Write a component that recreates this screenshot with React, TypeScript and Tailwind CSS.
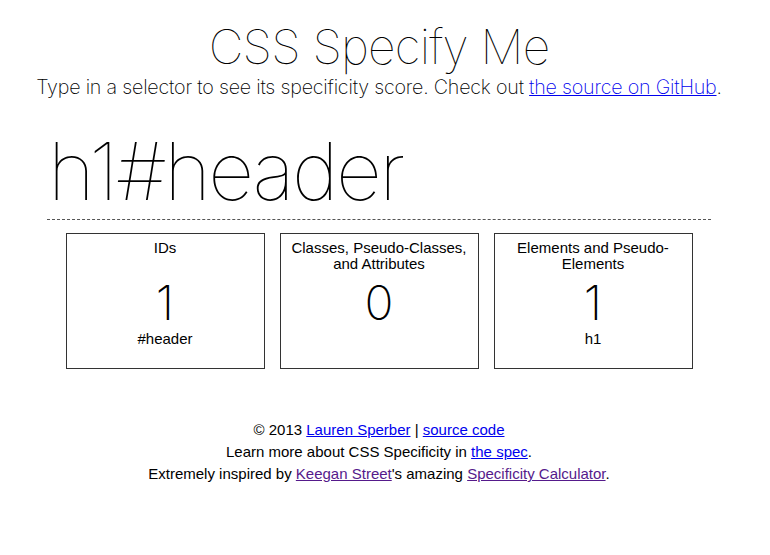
export default function App() {
  const boxes = [
    { title: "IDs", count: 1, items: "#header" },
    { title: "Classes, Pseudo-Classes, and Attributes", count: 0, items: "" },
    { title: "Elements and Pseudo-Elements", count: 1, items: "h1" },
  ]

  return (
    <div className="w-[758px] bg-white text-black" style={{ fontFamily: '"Liberation Sans", Arial, sans-serif' }}>
      <header className="text-center pt-[19px]" style={{ fontFamily: "Inter, sans-serif" }}>
        <h1 className="text-[48px] leading-[56px] font-thin tracking-[-0.8px]">CSS Specify Me</h1>
        <p className="text-[19.7px] leading-[24px] font-extralight tracking-[-0.2px]">
          Type in a selector to see its specificity score. Check out{" "}
          <a href="#" className="text-[#0000ee] underline">the source on GitHub</a>.
        </p>
      </header>

      {/* Selector input */}
      <div className="mx-[47px] mt-[24px] border-b border-dashed border-[#555]">
        <input
          defaultValue="h1#header"
          className="w-full pl-[1px] text-[80px] leading-[96px] font-thin tracking-[-2.5px] outline-none bg-transparent"
          style={{ fontFamily: "Inter, sans-serif" }}
        />
      </div>

      {/* Scores */}
      <div className="flex justify-center gap-[15px] mt-[13px]">
        {boxes.map((box) => (
          <div key={box.title} className="w-[199px] h-[136px] border border-[#333] text-center px-[6px] pt-[6px]">
            <div className="h-[32px] text-[15px] leading-[16px]">{box.title}</div>
            <div className="mt-[2px] text-[48px] leading-[58px] font-[150]" style={{ fontFamily: "Inter, sans-serif" }}>
              {box.count}
            </div>
            <div className="text-[15px] leading-[14px]">{box.items}</div>
          </div>
        ))}
      </div>

      <footer className="text-center text-[15px] leading-[22px] mt-[50px]">
        <p>
          © 2013 <a href="#" className="text-[#0000ee] underline">Lauren Sperber</a> |{" "}
          <a href="#" className="text-[#0000ee] underline">source code</a>
        </p>
        <p>
          Learn more about CSS Specificity in <a href="#" className="text-[#0000ee] underline">the spec</a>.
        </p>
        <p>
          Extremely inspired by <a href="#" className="text-[#551a8b] underline">Keegan Street</a>'s amazing{" "}
          <a href="#" className="text-[#551a8b] underline">Specificity Calculator</a>.
        </p>
      </footer>
    </div>
  )
}
